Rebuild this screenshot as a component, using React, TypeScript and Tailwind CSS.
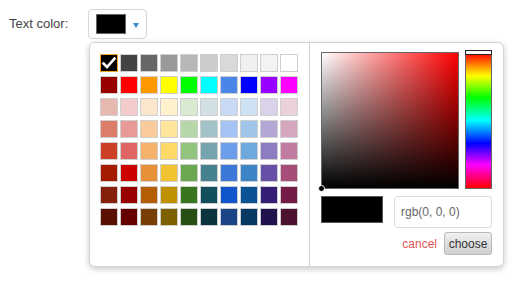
import React from 'react';

const PALETTE = [
  ['#000000', '#434343', '#666666', '#999999', '#b7b7b7', '#cccccc', '#d9d9d9', '#efefef', '#f3f3f3', '#ffffff'],
  ['#980000', '#ff0000', '#ff9900', '#ffff00', '#00ff00', '#00ffff', '#4a86e8', '#0000ff', '#9900ff', '#ff00ff'],
  ['#e6b8af', '#f4cccc', '#fce5cd', '#fff2cc', '#d9ead3', '#d0e0e3', '#c9daf8', '#cfe2f3', '#d9d2e9', '#ead1dc'],
  ['#dd7e6b', '#ea9999', '#f9cb9c', '#ffe599', '#b6d7a8', '#a2c4c9', '#a4c2f4', '#9fc5e8', '#b4a7d6', '#d5a6bd'],
  ['#cc4125', '#e06666', '#f6b26b', '#ffd966', '#93c47d', '#76a5af', '#6d9eeb', '#6fa8dc', '#8e7cc3', '#c27ba0'],
  ['#a61c00', '#cc0000', '#e69138', '#f1c232', '#6aa84f', '#45818e', '#3c78d8', '#3d85c6', '#674ea7', '#a64d79'],
  ['#85200c', '#990000', '#b45f06', '#bf9000', '#38761d', '#134f5c', '#1155cc', '#0b5394', '#351c75', '#741b47'],
  ['#5b0f00', '#660000', '#783f04', '#7f6000', '#274e13', '#0c343d', '#1c4587', '#073763', '#20124d', '#4c1130'],
];

function Check() {
  return (
    <svg width="16" height="16" viewBox="0 0 16 16" className="block">
      <path d="M2.5 8.5 L6 12 L13.5 3.5" fill="none" stroke="#fff" strokeWidth="2.6" strokeLinecap="square" />
    </svg>
  );
}

function Swatch({ color, selected }: { color: string; selected?: boolean }) {
  return (
    <div
      className={`w-[18px] h-[18px] border ${selected ? 'border-[#f5a623]' : 'border-[#cfcfcf]'}`}
      style={{ backgroundColor: color }}
    >
      {selected && <Check />}
    </div>
  );
}

export default function App() {
  return (
    <div className="relative h-[290px] w-[519px] bg-white font-['Liberation_Sans',Arial,sans-serif]">
      <div className="flex items-center pt-[9px]">
        <span className="w-[88px] pl-[9px] text-[13px] text-[#444]">Text color:</span>
        <button className="flex h-[30px] w-[59px] items-center rounded-[4px] border border-[#d6d6d6] bg-white pl-[7px]">
          <span className="block h-[20px] w-[30px] border border-[#666] bg-black" />
          <svg width="6" height="5" viewBox="0 0 6 5" className="ml-[7px] mt-[2px]">
            <path d="M0 0 H6 L3 5 Z" fill="#2b8cd8" />
          </svg>
        </button>
      </div>

      {/* popup */}
      <div className="absolute left-[89px] top-[42px] flex h-[225px] w-[415px] rounded-[6px] border border-[#d4d4d4] bg-white shadow-[0_2px_6px_rgba(0,0,0,0.22)]">
        <div className="w-[220px] border-r border-[#d0d0d0] pl-[10px] pt-[11px]">
          <div className="flex flex-col gap-[4px]">
            {PALETTE.map((row, i) => (
              <div key={i} className="flex gap-[2px]">
                {row.map((c, j) => (
                  <Swatch key={c} color={c} selected={i === 0 && j === 0} />
                ))}
              </div>
            ))}
          </div>
        </div>

        <div className="flex-1 pl-[11px] pt-[9px]">
          <div className="flex gap-[6px]">
            <div className="relative h-[137px] w-[138px] border border-[#666] bg-[#ff0000]">
              <div className="absolute inset-0 bg-gradient-to-r from-white to-transparent" />
              <div className="absolute inset-0 bg-gradient-to-t from-black to-transparent" />
              <div className="absolute -bottom-[4px] -left-[4px] h-[7px] w-[7px] rounded-full border border-white bg-black" />
            </div>
            <div className="relative h-[137px] w-[27px] border border-[#666] bg-[linear-gradient(to_bottom,#ff0000_0%,#ffff00_17%,#00ff00_33%,#00ffff_50%,#0000ff_67%,#ff00ff_83%,#ff0000_100%)]">
              <div className="absolute -left-[1px] -top-[3px] h-[5px] w-[27px] border border-[#222] bg-white" />
            </div>
          </div>

          <div className="mt-[7px] flex items-start gap-[11px]">
            <div className="h-[27px] w-[62px] border border-[#555] bg-black" />
            <div className="flex h-[32px] w-[98px] items-center rounded-[3px] border border-[#d9dfe6] pl-[6px] text-[12px] text-[#666]">
              rgb(0, 0, 0)
            </div>
          </div>

          <div className="mt-[4px] flex w-[171px] items-center justify-end gap-[7px]">
            <span className="text-[12px] text-[#e35454]">cancel</span>
            <button className="h-[23px] w-[48px] rounded-[3px] border border-[#b8b8b8] bg-gradient-to-b from-[#f0f0f0] to-[#cfcfcf] text-[12px] text-[#333]">
              choose
            </button>
          </div>
        </div>
      </div>
    </div>
  );
}
